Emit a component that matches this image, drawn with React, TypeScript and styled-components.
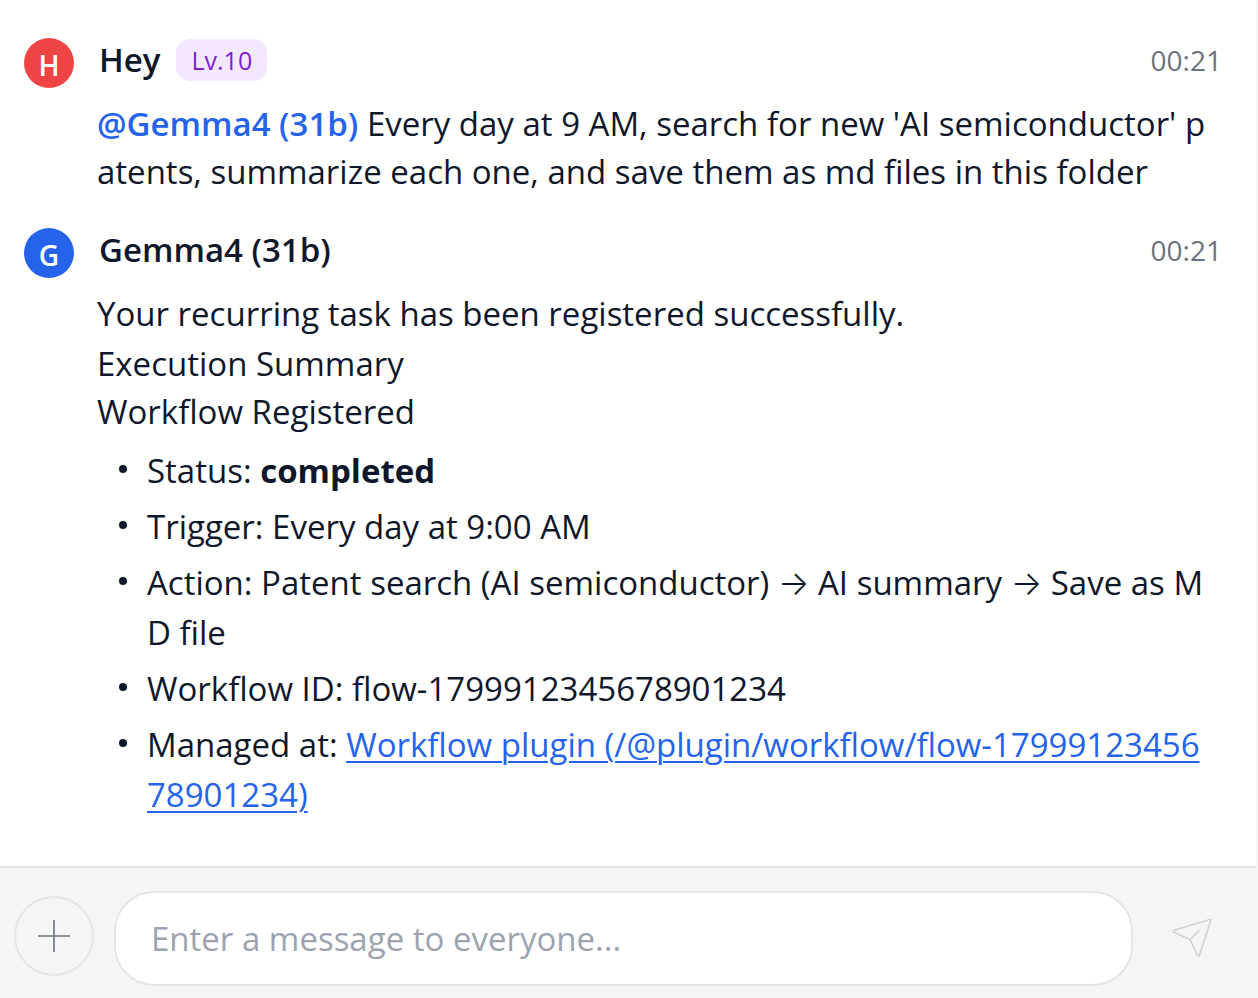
import React from "react";
import styled, { createGlobalStyle } from "styled-components";

const GlobalStyle = createGlobalStyle`
  *, *::before, *::after { box-sizing: border-box; }
  html, body, #root { height: 100%; }
  body {
    margin: 0;
    background: #ffffff;
    color: #0f172a;
    font-family: "Segoe UI", "Open Sans", "Noto Sans", sans-serif;
    font-size: 33px;
  }
`;

const Chat = styled.div`
  display: flex;
  flex-direction: column;
  min-height: 100%;
  border-right: 2px solid #f4f4f5;
`;

const Messages = styled.main`
  flex: 1;
  display: flex;
  flex-direction: column;
  gap: 28px;
  padding: 36px 34px 40px 24px;
`;

const Message = styled.article`
  display: flex;
  align-items: flex-start;
  gap: 23px;
`;

const Avatar = styled.div<{ $color: string }>`
  flex: none;
  display: flex;
  align-items: center;
  justify-content: center;
  width: 50px;
  height: 50px;
  margin-top: 2px;
  padding-top: 4px;
  border-radius: 50%;
  background: ${(p) => p.$color};
  color: #ffffff;
  font-size: 28px;
  font-weight: 600;
  line-height: 1;
`;

const Content = styled.div`
  flex: 1;
  min-width: 0;
`;

const Header = styled.header`
  display: flex;
  align-items: center;
  gap: 16px;
  height: 48px;
  margin-bottom: 16px;
  padding-left: 2px;
`;

const Name = styled.h2`
  margin: 0;
  font-size: 33px;
  font-weight: 600;
  line-height: 48px;
`;

const Level = styled.span`
  padding: 0 15px;
  border-radius: 14px;
  background: #f3e8ff;
  color: #7e22ce;
  font-size: 25px;
  line-height: 42px;
`;

const Time = styled.time`
  margin-left: auto;
  color: #6b7280;
  font-size: 28px;
  line-height: 48px;
`;

const Paragraph = styled.p`
  margin: 0 0 2px;
  padding-right: 6px;
  line-height: 48px;
  word-break: break-all;
`;

const Mention = styled.span`
  color: #2563eb;
  font-weight: 600;
`;

const List = styled.ul`
  display: flex;
  flex-direction: column;
  gap: 6px;
  margin: 10px 0 0;
  padding: 0 6px 0 0;
  list-style: none;
`;

const Item = styled.li`
  display: flex;
  line-height: 50px;
  word-break: break-all;

  &::before {
    content: "";
    flex: none;
    width: 8px;
    height: 8px;
    margin: 19px 20px 0 22px;
    border-radius: 50%;
    background: #0f172a;
  }
`;

const Arrow = styled.span`
  font-family: "Inter", sans-serif;
  font-weight: 300;
  line-height: 1;
`;

const Link = styled.a`
  color: #2563eb;
  text-decoration: underline;
  text-decoration-thickness: 2px;
  text-underline-offset: 4px;
`;

const Composer = styled.form`
  display: flex;
  align-items: center;
  gap: 20px;
  padding: 23px 25px 12px 14px;
  border-top: 2px solid #e0e1e3;
  background: #f5f5f5;
`;

const AddButton = styled.button`
  flex: none;
  display: flex;
  align-items: center;
  justify-content: center;
  width: 80px;
  height: 80px;
  margin-bottom: 6px;
  padding: 0;
  border: 2px solid #e3e5e7;
  border-radius: 50%;
  background: transparent;
  color: #6b7280;
`;

const MessageInput = styled.input`
  flex: 1;
  min-width: 0;
  height: 95px;
  padding: 0 35px;
  border: 2px solid #e3e5e8;
  border-radius: 40px;
  outline: none;
  background: #ffffff;
  color: #0f172a;
  font-family: inherit;
  font-size: 33px;

  &::placeholder {
    color: #9ca3af;
    opacity: 1;
  }
`;

const SendButton = styled.button`
  flex: none;
  display: flex;
  align-items: center;
  justify-content: center;
  width: 78px;
  height: 80px;
  margin-bottom: 2px;
  padding: 0;
  border: 0;
  background: transparent;
  color: #cdd0d5;
`;

export default function App() {
  return (
    <Chat>
      <GlobalStyle />
      <Messages>
        <Message>
          <Avatar $color="#ef4444">H</Avatar>
          <Content>
            <Header>
              <Name>Hey</Name>
              <Level>Lv.10</Level>
              <Time>00:21</Time>
            </Header>
            <Paragraph>
              <Mention>@Gemma4 (31b)</Mention> Every day at 9 AM, search for new 'AI semiconductor'
              patents, summarize each one, and save them as md files in this folder
            </Paragraph>
          </Content>
        </Message>

        <Message>
          <Avatar $color="#2563eb">G</Avatar>
          <Content>
            <Header>
              <Name>Gemma4 (31b)</Name>
              <Time>00:21</Time>
            </Header>
            <Paragraph>Your recurring task has been registered successfully.</Paragraph>
            <Paragraph>
              Execution Summary
              <br />
              Workflow Registered
            </Paragraph>
            <List>
              <Item>
                <span>
                  Status: <strong>completed</strong>
                </span>
              </Item>
              <Item>Trigger: Every day at 9:00 AM</Item>
              <Item>
                <span>
                  Action: Patent search (AI semiconductor) <Arrow>→</Arrow> AI summary <Arrow>→</Arrow> Save as MD
                  file
                </span>
              </Item>
              <Item>Workflow ID: flow-1799912345678901234</Item>
              <Item>
                <span>
                  Managed at:{" "}
                  <Link href="/@plugin/workflow/flow-1799912345678901234">
                    Workflow plugin (/@plugin/workflow/flow-1799912345678901234)
                  </Link>
                </span>
              </Item>
            </List>
          </Content>
        </Message>
      </Messages>

      <Composer onSubmit={(e) => e.preventDefault()}>
        <AddButton type="button" aria-label="Add attachment">
          <svg width="34" height="34" viewBox="0 0 34 34" fill="none" stroke="currentColor" strokeWidth="1.6">
            <path d="M17 1v32M1 17h32" />
          </svg>
        </AddButton>
        <MessageInput type="text" aria-label="Message" placeholder="Enter a message to everyone..." />
        <SendButton type="submit" aria-label="Send message">
          <svg
            width="40"
            height="40"
            viewBox="0 0 40 40"
            fill="none"
            stroke="currentColor"
            strokeWidth="1.5"
            strokeLinecap="round"
            strokeLinejoin="round"
          >
            <path d="M37.2 1.6 2.2 12.2c-1.1.4-1.2 1.6-.2 2.1L18 21.6l7.4 15.6c.5 1 1.9.9 2.2-.2L38.6 3c.2-1-.4-1.7-1.4-1.4Z" />
            <path d="M18 21.6 27.3 12.3" />
          </svg>
        </SendButton>
      </Composer>
    </Chat>
  );
}
